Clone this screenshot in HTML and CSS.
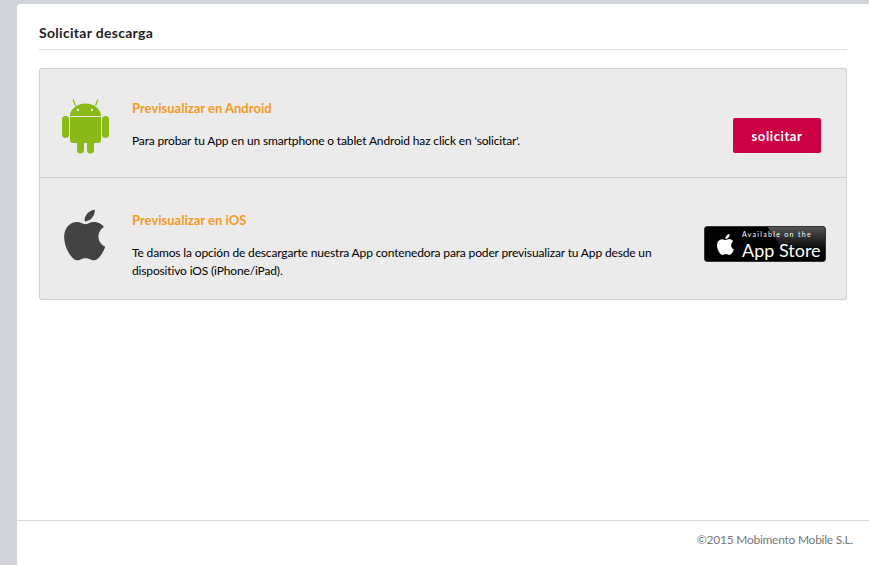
FILE: index.html
```html
<!DOCTYPE html>
<html lang="es">
<head>
<meta charset="utf-8">
<title>Solicitar descarga</title>
<link rel="stylesheet" href="styles.css">
</head>
<body>
<main class="page">
  <div class="content">
    <h1 class="heading">Solicitar descarga</h1>
    <section class="box">
      <article class="row row-android">
        <svg class="icon-android" viewBox="0 0 47 55" width="47" height="55" aria-hidden="true">
          <path class="droid" d="M8 17a15.500 12.500 0 0 1 31 0z"/>
          <path class="droid-line" d="M13.500 6.500 11 .5M33.500 6.500 36 .5"/>
          <circle class="droid-eye" cx="16" cy="11" r="1.200"/>
          <circle class="droid-eye" cx="30" cy="11" r="1.200"/>
          <path class="droid" d="M8 18h31v23a3 3 0 0 1-3 3h-4v7a3.500 3.500 0 0 1-7 0v-7h-3v7a3.500 3.500 0 0 1-7 0v-7h-4a3 3 0 0 1-3-3z"/>
          <rect class="droid" x="0" y="17" width="7" height="22" rx="3.500"/>
          <rect class="droid" x="40" y="17" width="7" height="22" rx="3.500"/>
        </svg>
        <div class="text">
          <h2 class="title">Previsualizar en Android</h2>
          <p class="desc">Para probar tu App en un smartphone o tablet Android haz click en 'solicitar'.</p>
        </div>
        <button class="request" type="button">solicitar</button>
      </article>
      <article class="row row-ios">
        <svg class="icon-apple" viewBox="3.800 2 16.600 20" width="42" height="52" aria-hidden="true">
          <path d="M18.710 19.500c-.83 1.240-1.710 2.450-3.050 2.470-1.340.03-1.770-.79-3.290-.79-1.530 0-2 .77-3.270.82-1.310.05-2.300-1.320-3.140-2.530C4.250 17 2.940 12.450 4.700 9.390c.87-1.520 2.430-2.480 4.120-2.510 1.280-.02 2.500.87 3.290.87.78 0 2.260-1.070 3.810-.91.65.03 2.470.26 3.640 1.980-.09.06-2.170 1.280-2.150 3.810.03 3.020 2.650 4.030 2.680 4.040-.03.07-.42 1.440-1.380 2.830M13 3.500c.73-.83 1.940-1.460 2.940-1.500.13 1.170-.34 2.350-1.040 3.190-.69.85-1.830 1.510-2.950 1.420-.15-1.150.41-2.350 1.050-3.110z"/>
        </svg>
        <div class="text">
          <h2 class="title">Previsualizar en iOS</h2>
          <p class="desc">Te damos la opción de descargarte nuestra App contenedora para poder previsualizar tu App desde un dispositivo iOS (iPhone/iPad).</p>
        </div>
        <a class="badge" href="#">
          <svg class="badge-apple" viewBox="0 0 24 24" width="25" height="25" aria-hidden="true">
            <path d="M18.710 19.500c-.83 1.240-1.710 2.450-3.050 2.470-1.340.03-1.770-.79-3.290-.79-1.530 0-2 .77-3.270.82-1.310.05-2.300-1.320-3.140-2.530C4.250 17 2.940 12.450 4.700 9.390c.87-1.520 2.430-2.480 4.120-2.510 1.280-.02 2.500.87 3.290.87.78 0 2.260-1.070 3.810-.91.65.03 2.470.26 3.640 1.980-.09.06-2.170 1.280-2.150 3.810.03 3.020 2.650 4.030 2.680 4.040-.03.07-.42 1.440-1.380 2.830M13 3.500c.73-.83 1.940-1.460 2.940-1.500.13 1.170-.34 2.350-1.040 3.190-.69.85-1.830 1.510-2.950 1.420-.15-1.150.41-2.350 1.050-3.110z"/>
          </svg>
          <span class="badge-text">
            <span class="badge-small">Available on the</span>
            <span class="badge-big">App Store</span>
          </span>
        </a>
      </article>
    </section>
  </div>
  <footer class="footer">©2015 Mobimento Mobile S.L.</footer>
</main>
</body>
</html>
```
FILE: styles.css
```css
* { box-sizing: border-box; }
html, body { height: 100%; }
body {
  margin: 0;
  padding: 4px 0 0 17px;
  background: #d1d5da;
  font-family: Lato, "Open Sans", sans-serif;
  overflow: hidden;
}
.page {
  height: 561px;
  background: #fff;
  border-top-left-radius: 4px;
  display: flex;
  flex-direction: column;
}
.content {
  flex: 1;
  padding: 20px 22px 0;
}
.heading {
  margin: 0 0 18px;
  padding-bottom: 8px;
  height: 26px;
  border-bottom: 1px solid #dcdcdc;
  font-size: 14px;
  line-height: 17px;
  font-weight: 700;
  letter-spacing: .3px;
  color: #222;
}
.box {
  background: #ebebeb;
  border: 1px solid #d2d2d2;
  border-radius: 2px;
}
.row {
  display: flex;
  position: relative;
}
.row-android {
  height: 109px;
  border-bottom: 1px solid #cfcfcf;
  padding: 30px 25px 0 22px;
}
.row-ios {
  height: 121px;
  padding: 33px 20px 0 24px;
}
.icon-android { flex: none; margin-right: 23px; }
.icon-apple { flex: none; margin: -2px 26px 0 0; }
.droid { fill: #8aba16; }
.droid-line { stroke: #8aba16; stroke-width: 1.200; fill: none; }
.droid-eye { fill: #ebebeb; }
.icon-apple path { fill: #434343; }
.text { flex: 1; min-width: 0; }
.title {
  margin: 0 0 15px;
  font-size: 13px;
  line-height: 18px;
  font-weight: 700;
  color: #f39a21;
}
.desc {
  margin: 0;
  max-width: 530px;
  font-size: 12px;
  line-height: 18px;
  letter-spacing: -.15px;
  color: #000;
}
.request {
  align-self: flex-end;
  flex: none;
  width: 88px;
  height: 35px;
  margin-bottom: 24px;
  border: 0;
  border-radius: 2px;
  background: #cc0044;
  color: #fff;
  font-family: inherit;
  font-size: 13px;
  font-weight: 700;
  letter-spacing: .6px;
}
.badge {
  flex: none;
  align-self: flex-start;
  width: 122px;
  height: 36px;
  margin-top: 15px;
  padding: 0 0 0 8px;
  display: flex;
  align-items: center;
  gap: 4px;
  border-radius: 3px;
  border: 1px solid #333;
  background:
    linear-gradient(55deg, #000 0 60%, transparent 60%),
    linear-gradient(to bottom, #555, #000 70%);
  color: #fff;
  text-decoration: none;
}
.badge-apple path { fill: #fff; }
.badge-text {
  display: flex;
  flex-direction: column;
  font-family: Lato, sans-serif;
}
.badge-small { font-size: 7px; line-height: 11px; letter-spacing: 1.300px; }
.badge-big { font-size: 18px; line-height: 20px; letter-spacing: 0; }
.footer {
  height: 45px;
  border-top: 1px solid #d8d8d8;
  padding: 11px 16px 0 0;
  text-align: right;
  font-size: 12px;
  line-height: 16px;
  letter-spacing: -.26px;
  color: #777;
}
```
